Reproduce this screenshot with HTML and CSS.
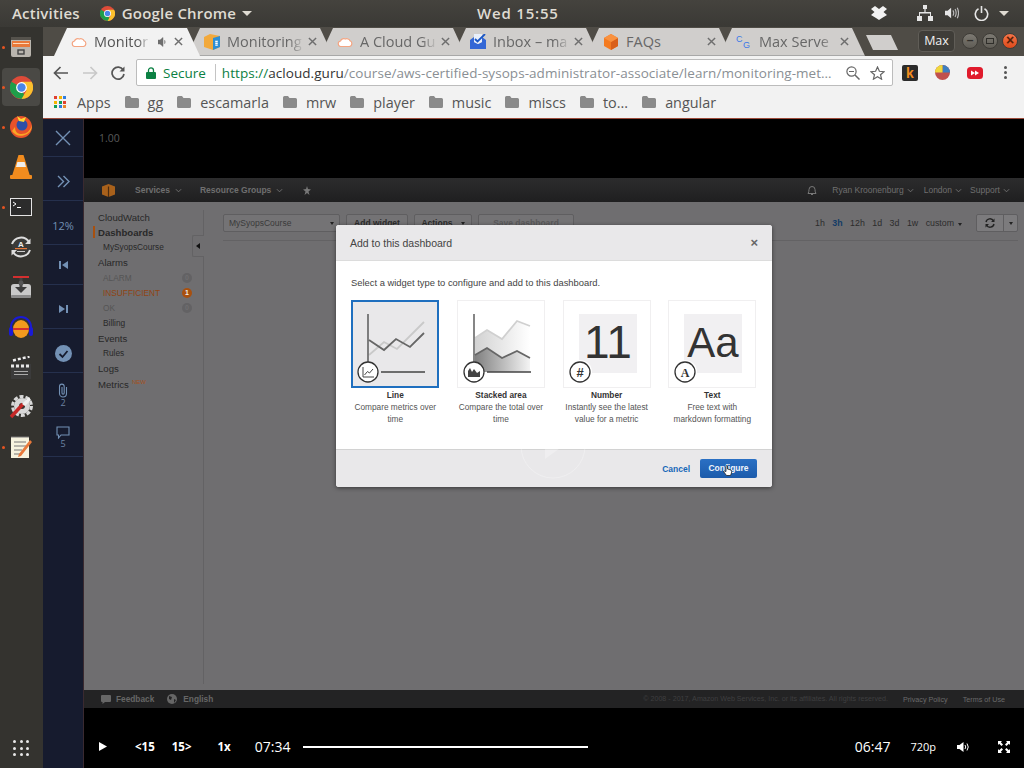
FILE: index.html

```html
<!DOCTYPE html>
<html lang="en">
<head>
  <meta charset="UTF-8">
  <title>A Cloud Guru - Monitoring</title>
  <meta name="viewport" content="width=device-width, initial-scale=1.0">
  <link rel="stylesheet" href="styles.css">
</head>
<body>
  <svg class="defs" width="0" height="0">
    <defs>
      <symbol id="chrome" viewBox="0 0 32 32">
        <circle cx="16" cy="16" r="16" fill="#dd4b39"/>
        <path d="M16 16 L2.1 24 A16 16 0 0 1 2 8 Z M16 16 L2.1 24 L8 29.9 L16 32 A16 16 0 0 0 21 31 Z" fill="#1e9e4a"/>
        <path d="M16 8 H30 A16 16 0 0 1 16 32 L23 20 Z" fill="#fbc02d"/>
        <circle cx="16" cy="16" r="7.5" fill="#fff"/>
        <circle cx="16" cy="16" r="5.8" fill="#4a86e8"/>
      </symbol>
      <symbol id="cloud" viewBox="0 0 16 10">
        <path d="M3.5 9.5 H12.5 A3 3 0 0 0 13 3.8 A3.4 3.4 0 0 0 8.5 2 A3.5 3.5 0 0 0 3.5 4 A2.8 2.8 0 0 0 3.5 9.5 Z" fill="#fff" stroke="#f4a582" stroke-width="1.2"/>
      </symbol>
      <symbol id="folder" viewBox="0 0 14 12">
        <path d="M0 1.5 Q0 0 1.5 0 H5 L6.5 2 H12.5 Q14 2 14 3.5 V10.5 Q14 12 12.5 12 H1.5 Q0 12 0 10.5 Z" fill="#8a8a8a"/>
      </symbol>
      <symbol id="tabx" viewBox="0 0 10 10">
        <path d="M1 1 L9 9 M9 1 L1 9" stroke="#6e6e6e" stroke-width="1.6"/>
      </symbol>
      <symbol id="caret" viewBox="0 0 8 5">
        <path d="M1 1 L4 4 L7 1" fill="none" stroke="#777" stroke-width="1"/>
      </symbol>
      <linearGradient id="lightfill" x1="0" x2="1" y1="0" y2="0">
        <stop offset="0" stop-color="#d2d2d2"/><stop offset="1" stop-color="#fff"/>
      </linearGradient>
      <linearGradient id="darkfill" x1="0" x2="1" y1="0" y2="0">
        <stop offset="0" stop-color="#808080"/><stop offset="1" stop-color="#f4f4f4"/>
      </linearGradient>
    </defs>
  </svg>

  <header class="topbar">
    <span class="top-item">Activities</span>
    <span class="top-app">
      <svg class="top-chrome" width="15" height="15"><use href="#chrome"/></svg>
      Google Chrome
      <span class="top-caret"></span>
    </span>
    <span class="top-clock">Wed 15:55</span>
    <span class="top-tray">
      <svg class="tray-drop" width="16" height="14" viewBox="0 0 16 14"><path d="M0 3 L4 0 L8 3 L12 0 L16 3 L12.5 6 L16 9 L11 12 L8 14 L5 12 L0 9 L3.5 6 Z" fill="#f2f2f2"/></svg>
      <svg class="tray-net" width="16" height="16" viewBox="0 0 16 16"><path d="M6 0 H10 V4 H8.6 V7 H14 V11 H16 V16 H11 V11 H13 V8.4 H3 V11 H5 V16 H0 V11 H2 V7 H7.4 V4 H6 Z" fill="#e6e6e6"/></svg>
      <svg class="tray-vol" width="14" height="14" viewBox="0 0 16 14"><path d="M0 4.5 H3 L7 1 V13 L3 9.5 H0 Z" fill="#e6e6e6"/><path d="M9 4 Q11 7 9 10 M11.5 2.5 Q14 7 11.5 11.5 M14 1 Q17 7 14 13" fill="none" stroke="#bcbcbc" stroke-width="1.3"/></svg>
      <svg class="tray-power" width="15" height="15" viewBox="0 0 15 15"><path d="M4.5 2.8 A6.2 6.2 0 1 0 10.5 2.8 M7.5 0 V7" fill="none" stroke="#e6e6e6" stroke-width="1.6"/></svg>
      <span class="top-caret"></span>
    </span>
  </header>

  <div class="desktop">
    <aside class="dock">
      <div class="dock-item has-dot">
        <svg width="22" height="22" viewBox="0 0 22 22"><rect x="1" y="1" width="20" height="20" rx="2" fill="#b9b5ae"/><rect x="1" y="1" width="20" height="3" fill="#55524c"/><rect x="2" y="5" width="18" height="6" fill="#e8793a"/><rect x="3" y="7" width="16" height="1" fill="#ffd9b8"/><rect x="8" y="14" width="6" height="4" fill="none" stroke="#444" stroke-width="1.4"/></svg>
      </div>
      <div class="dock-item is-active has-dot">
        <svg width="23" height="23"><use href="#chrome"/></svg>
      </div>
      <div class="dock-item has-dot">
        <svg width="24" height="24" viewBox="0 0 24 24"><circle cx="12" cy="12" r="11" fill="#e8522a"/><path d="M3 16 A11 11 0 0 0 23 10 Q20 20 11 19 Q6 18 6 12 Z" fill="#f9a825"/><circle cx="13" cy="10" r="5.5" fill="#2c4fa8"/><path d="M8 1 L12 4 L17 2 L15 7 L10 6 Z" fill="#fdd835"/></svg>
      </div>
      <div class="dock-item">
        <svg width="22" height="26" viewBox="0 0 22 26"><path d="M8.5 1 H13.5 L20 22 H2 Z" fill="#f28c1e"/><path d="M7.4 8 H14.6 L16 13 H6 Z" fill="#eee"/><rect x="0" y="21" width="22" height="4" rx="1" fill="#f28c1e"/></svg>
      </div>
      <div class="dock-item has-dot">
        <svg width="22" height="18" viewBox="0 0 22 18"><rect x="0.5" y="0.5" width="21" height="17" fill="#2c2c2c" stroke="#e4e4e4"/><path d="M3 4 L6 6 L3 8" fill="none" stroke="#fff"/><rect x="7" y="9" width="4" height="1" fill="#fff"/></svg>
      </div>
      <div class="dock-item">
        <svg width="22" height="22" viewBox="0 0 22 22"><circle cx="11" cy="11" r="9" fill="#3a3a38"/><path d="M2 8 A9.500 9.500 0 0 1 19 6 M20 14 A9.500 9.500 0 0 1 3 16" fill="none" stroke="#ddd" stroke-width="2"/><path d="M20.500 2.500 V8 H15 Z M1.500 19.500 V14 H7 Z" fill="#ddd"/><text class="dock-a" x="11" y="11" text-anchor="middle">A</text><rect x="5" y="12" width="12" height="1.2" fill="#e8793a"/><rect x="7" y="15" width="8" height="1" fill="#ccc"/></svg>
      </div>
      <div class="dock-item">
        <svg width="24" height="24" viewBox="0 0 24 24"><rect x="2" y="9" width="20" height="14" rx="3" fill="#c9c9c9"/><rect x="4" y="1" width="16" height="2" fill="#d32f2f"/><rect x="10.500" y="3" width="3" height="11" fill="#444"/><circle cx="12" cy="8" r="2.500" fill="#555"/><path d="M6 12 H18 L12 18 Z" fill="#3c3c3c"/><rect x="2" y="20" width="20" height="3" rx="1" fill="#8b8b8b"/></svg>
      </div>
      <div class="dock-item">
        <svg width="26" height="24" viewBox="0 0 26 24"><path d="M3 15 V12 A10 10 0 0 1 23 12 V15" fill="none" stroke="#1a1ad6" stroke-width="2"/><rect x="1" y="12" width="4" height="9" rx="2" fill="#1a1ad6"/><rect x="21" y="12" width="4" height="9" rx="2" fill="#1a1ad6"/><ellipse cx="13" cy="14" rx="8" ry="9" fill="#f29a1e"/><rect x="5" y="13" width="16" height="2" fill="#d32f2f"/></svg>
      </div>
      <div class="dock-item">
        <svg width="22" height="23" viewBox="0 0 22 23"><path d="M1 5 L20 0 L21 3 L2 8 Z" fill="#333"/><path d="M3 4.500 L19.500 0.500" stroke="#eee" stroke-width="2.500" stroke-dasharray="3 2"/><rect x="1" y="8" width="20" height="15" fill="#3b3b3b"/><path d="M1 10 H21" stroke="#e6e6e6" stroke-width="3" stroke-dasharray="3 2"/><rect x="4" y="15" width="14" height="1" fill="#aaa"/><rect x="4" y="18" width="14" height="1" fill="#aaa"/></svg>
      </div>
      <div class="dock-item">
        <svg width="24" height="24" viewBox="0 0 24 24"><circle cx="13" cy="11" r="8" fill="#d8d8d8"/><circle cx="13" cy="11" r="9.500" fill="none" stroke="#d8d8d8" stroke-width="3" stroke-dasharray="4 2"/><circle cx="13" cy="11" r="3" fill="#34332f"/><path d="M2 22 L14 9" stroke="#c62828" stroke-width="3.400"/><path d="M13 9 L20 2 L22 5 L16 11 Z" fill="#f0f0f0"/></svg>
      </div>
      <div class="dock-item has-dot">
        <svg width="22" height="24" viewBox="0 0 22 24"><rect x="1" y="2" width="18" height="21" fill="#f6f3df"/><path d="M1 2 H19 M4 7 H16 M4 11 H16 M4 15 H12 M4 19 H10" stroke="#777"/><path d="M9 19 L20 5 L22 7 L11 21 L8 22 Z" fill="#e8793a"/></svg>
      </div>
      <div class="dock-grid">
        <i></i><i></i><i></i><i></i><i></i><i></i><i></i><i></i><i></i>
      </div>
    </aside>

    <main class="browser">
      <div class="tabstrip">
        <div class="tab tab-active">
          <svg class="fav" width="16" height="10"><use href="#cloud"/></svg>
          <span class="tab-title">Monitori</span>
          <svg class="tab-sound" width="10" height="10" viewBox="0 0 10 10"><path d="M0 3 H2 L5 0.5 V9.5 L2 7 H0 Z M6.5 3 Q8 5 6.5 7" fill="#6e6e6e" stroke="#6e6e6e" stroke-width=".5"/></svg>
          <svg class="tab-x" width="9" height="9"><use href="#tabx"/></svg>
        </div>
        <div class="tab">
          <svg class="fav" width="16" height="16" viewBox="0 0 16 16"><path d="M0 3 L6 0 L16 2 V13 L9 16 L0 13 Z" fill="#f2a93b"/><path d="M9 4 L16 2 V13 L9 16 Z" fill="#2d8fd5"/><path d="M11 6.5 H14 V12 H11 Z M11 8.5 H14 M11 10.5 H14" fill="#fff" stroke="#2d8fd5" stroke-width=".5"/></svg>
          <span class="tab-title">Monitoring</span>
          <svg class="tab-x" width="9" height="9"><use href="#tabx"/></svg>
        </div>
        <div class="tab">
          <svg class="fav" width="16" height="10"><use href="#cloud"/></svg>
          <span class="tab-title">A Cloud Gu</span>
          <svg class="tab-x" width="9" height="9"><use href="#tabx"/></svg>
        </div>
        <div class="tab">
          <svg class="fav" width="16" height="15" viewBox="0 0 16 15"><path d="M0 6 L4 3 V8 L8 10 L12 8 V3 L16 6 V15 H0 Z" fill="#3367d6"/><path d="M4 0 H12 V8 L8 10 L4 8 Z" fill="#e8effb"/><path d="M5 5 L7.5 7.5 L15 0" fill="none" stroke="#1a56c4" stroke-width="1.8"/></svg>
          <span class="tab-title">Inbox – ma</span>
          <svg class="tab-x" width="9" height="9"><use href="#tabx"/></svg>
        </div>
        <div class="tab">
          <svg class="fav" width="16" height="16" viewBox="0 0 16 16"><path d="M8 0 L15 4 V12 L8 16 L1 12 V4 Z" fill="#f47b20"/><path d="M8 8 L15 4 V12 L8 16 Z" fill="#d9601a"/><path d="M1 4 L8 0 L15 4 L8 8 Z" fill="#f99240"/></svg>
          <span class="tab-title tab-title-short">FAQs</span>
          <svg class="tab-x" width="9" height="9"><use href="#tabx"/></svg>
        </div>
        <div class="tab">
          <span class="fav fav-cg"><i>C</i><i>G</i></span>
          <span class="tab-title">Max Serve</span>
          <svg class="tab-x" width="9" height="9"><use href="#tabx"/></svg>
        </div>
        <div class="newtab"></div>
        <span class="max-badge">Max</span>
        <div class="winctl">
          <span class="winbtn">–</span>
          <span class="winbtn winbtn-box"></span>
          <span class="winbtn winbtn-close">×</span>
        </div>
      </div>

      <div class="toolbar">
        <svg class="nav-ico" width="16" height="14" viewBox="0 0 16 14"><path d="M15 7 H2 M7.5 1 L1.5 7 L7.5 13" fill="none" stroke="#555" stroke-width="1.7"/></svg>
        <svg class="nav-ico" width="16" height="14" viewBox="0 0 16 14"><path d="M1 7 H14 M8.5 1 L14.5 7 L8.5 13" fill="none" stroke="#c8c8c8" stroke-width="1.7"/></svg>
        <svg class="nav-ico" width="14" height="14" viewBox="0 0 14 14"><path d="M12.2 4 A6 6 0 1 0 13 8" fill="none" stroke="#555" stroke-width="1.7"/><path d="M13.5 0.5 V5.5 H8.5 Z" fill="#555"/></svg>
        <div class="omnibox">
          <svg class="lock" width="10" height="12" viewBox="0 0 10 12"><path d="M2.5 5 V3.4 A2.5 2.5 0 0 1 7.5 3.4 V5" fill="none" stroke="#0b8043" stroke-width="1.3"/><rect y="5" width="10" height="7" rx="1" fill="#0b8043"/></svg>
          <span class="secure">Secure</span>
          <span class="omni-sep"></span>
          <span class="url"><span class="url-https">https://</span><span class="url-host">acloud.guru</span>/course/aws-certified-sysops-administrator-associate/learn/monitoring-met…</span>
          <svg class="omni-ico" width="14" height="14" viewBox="0 0 14 14"><circle cx="5.5" cy="5.5" r="4.6" fill="none" stroke="#666" stroke-width="1.2"/><path d="M9 9 L13.5 13.5" stroke="#666" stroke-width="1.5"/><path d="M3 5.5 H8" stroke="#666"/></svg>
          <svg class="omni-ico" width="15" height="14" viewBox="0 0 15 14"><path d="M7.5 1 L9.4 5.3 L14 5.7 L10.5 8.7 L11.6 13.2 L7.5 10.8 L3.4 13.2 L4.5 8.7 L1 5.7 L5.6 5.3 Z" fill="none" stroke="#666" stroke-width="1.2"/></svg>
        </div>
        <div class="extensions">
          <span class="ext-k">k</span>
          <svg width="15" height="15" viewBox="0 0 16 16"><circle cx="8" cy="8" r="8" fill="#c0504d"/><path d="M8 8 V0 A8 8 0 0 1 16 8 Z" fill="#3d7fc1"/><path d="M8 8 V0 A8 8 0 0 0 0 8 Z" fill="#efd83c"/></svg>
          <svg width="16" height="12" viewBox="0 0 16 12"><rect width="16" height="12" rx="3.5" fill="#e01b2c"/><path d="M4 3.5 L8 6 L4 8.500 Z M8 3.500 L12 6 L8 8.500 Z" fill="#fff"/></svg>
          <span class="menu-dots"><i></i><i></i><i></i></span>
        </div>
      </div>

      <nav class="bookmarks">
        <span class="bm bm-apps">
          <span class="apps-grid">
            <i class="c1"></i><i class="c2"></i><i class="c3"></i>
            <i class="c4"></i><i class="c5"></i><i class="c6"></i>
            <i class="c7"></i><i class="c8"></i><i class="c9"></i>
          </span>
          Apps
        </span>
        <span class="bm"><svg width="14" height="12"><use href="#folder"/></svg>gg</span>
        <span class="bm"><svg width="14" height="12"><use href="#folder"/></svg>escamarla</span>
        <span class="bm"><svg width="14" height="12"><use href="#folder"/></svg>mrw</span>
        <span class="bm"><svg width="14" height="12"><use href="#folder"/></svg>player</span>
        <span class="bm"><svg width="14" height="12"><use href="#folder"/></svg>music</span>
        <span class="bm"><svg width="14" height="12"><use href="#folder"/></svg>miscs</span>
        <span class="bm"><svg width="14" height="12"><use href="#folder"/></svg>to...</span>
        <span class="bm"><svg width="14" height="12"><use href="#folder"/></svg>angular</span>
      </nav>

      <div class="player">
        <aside class="rail">
          <div class="rail-item rail-first">
            <svg width="16" height="16" viewBox="0 0 16 16"><path d="M1 1 L15 15 M15 1 L1 15" stroke="#7391b5" stroke-width="1.4"/></svg>
          </div>
          <div class="rail-item rail-tall">
            <svg width="13" height="13" viewBox="0 0 13 13"><path d="M1 1 L6.500 6.500 L1 12 M6.500 1 L12 6.500 L6.500 12" fill="none" stroke="#7391b5" stroke-width="1.4"/></svg>
          </div>
          <div class="rail-item rail-tall rail-pct">12%</div>
          <div class="rail-item">
            <svg width="9" height="8" viewBox="0 0 9 8"><path d="M0 0 H2 V8 H0 Z M9 0 V8 L3 4 Z" fill="#7391b5"/></svg>
          </div>
          <div class="rail-item rail-tall">
            <svg width="9" height="8" viewBox="0 0 9 8"><path d="M9 0 H7 V8 H9 Z M0 0 V8 L6 4 Z" fill="#7391b5"/></svg>
          </div>
          <div class="rail-item rail-tall">
            <svg width="17" height="17" viewBox="0 0 17 17"><circle cx="8.500" cy="8.500" r="8.500" fill="#7391b5"/><path d="M4.500 9 L7.500 12 L12.500 6" fill="none" stroke="#161b2e" stroke-width="1.800"/></svg>
          </div>
          <div class="rail-item rail-tall rail-stack">
            <svg width="10" height="15" viewBox="0 0 10 15"><path d="M8.500 4 V10.500 A3.500 3.500 0 0 1 1.500 10.500 V3.500 A2.300 2.300 0 0 1 6.200 3.500 V10 A1 1 0 0 1 4 10 V4" fill="none" stroke="#7391b5" stroke-width="1.100"/></svg>
            <span>2</span>
          </div>
          <div class="rail-item rail-stack">
            <svg width="14" height="13" viewBox="0 0 14 13"><path d="M1 1 H13 V9 H5 L2.500 12 V9 H1 Z" fill="none" stroke="#7391b5" stroke-width="1.100"/></svg>
            <span>5</span>
          </div>
        </aside>

        <section class="video">
          <div class="speedbar">1.00</div>

          <div class="aws">
            <div class="aws-nav">
              <svg class="aws-cube" width="13" height="13" viewBox="0 0 13 13"><path d="M0 2.500 L6.500 0 L13 2.500 V10.500 L6.500 13 L0 10.500 Z" fill="#a8611b"/><path d="M5.900 2.500 H7.100 V13 H5.900 Z" fill="#4a2c10"/></svg>
              <span class="aws-menu aws-services">Services<svg width="7" height="5"><use href="#caret"/></svg></span>
              <span class="aws-menu aws-groups">Resource Groups<svg width="7" height="5"><use href="#caret"/></svg></span>
              <svg class="aws-pin" width="8" height="9" viewBox="0 0 8 9"><path d="M4 0 L5 3 L8 3.500 L5.500 5.500 L6.500 9 L4 7 L1.500 9 L2.500 5.500 L0 3.500 L3 3 Z" fill="#777"/></svg>
              <svg class="aws-bell" width="10" height="11" viewBox="0 0 10 11"><path d="M1 8.500 Q2 7 2 4.500 A3 3 0 0 1 8 4.500 Q8 7 9 8.500 Z M4 9.500 H6" fill="none" stroke="#777"/></svg>
              <span class="aws-menu aws-user">Ryan Kroonenburg<svg width="7" height="5"><use href="#caret"/></svg></span>
              <span class="aws-menu aws-region">London<svg width="7" height="5"><use href="#caret"/></svg></span>
              <span class="aws-menu aws-support">Support<svg width="7" height="5"><use href="#caret"/></svg></span>
            </div>

            <div class="aws-body">
              <nav class="cw-side">
                <span class="cw-link">CloudWatch</span>
                <span class="cw-link cw-current">Dashboards</span>
                <span class="cw-sub">MySyopsCourse</span>
                <span class="cw-link">Alarms</span>
                <span class="cw-sub cw-off">ALARM<b class="cw-count">0</b></span>
                <span class="cw-sub cw-warn">INSUFFICIENT<b class="cw-count cw-count-on">1</b></span>
                <span class="cw-sub cw-off">OK<b class="cw-count">0</b></span>
                <span class="cw-sub">Billing</span>
                <span class="cw-link">Events</span>
                <span class="cw-sub">Rules</span>
                <span class="cw-link">Logs</span>
                <span class="cw-link">Metrics<sup class="cw-new">NEW</sup></span>
                <span class="cw-toggle"></span>
              </nav>
              <div class="cw-main">
                <div class="cw-tools">
                  <span class="cw-select">MySyopsCourse<i class="cw-down"></i></span>
                  <span class="cw-btn cw-add">Add widget</span>
                  <span class="cw-btn cw-actions">Actions<i class="cw-down"></i></span>
                  <span class="cw-btn cw-save">Save dashboard</span>
                  <span class="cw-ranges">
                    <span>1h</span><span class="cw-range-on">3h</span><span>12h</span><span>1d</span><span>3d</span><span>1w</span><span>custom<i class="cw-down"></i></span>
                  </span>
                  <span class="cw-refresh">
                    <span class="cw-refresh-l"><svg width="10" height="10" viewBox="0 0 10 10"><path d="M1 4 A4 4 0 0 1 8.500 3 M9 6 A4 4 0 0 1 1.500 7" fill="none" stroke="#222" stroke-width="1.400"/><path d="M9.500 0.500 V4 H6 Z M0.500 9.500 V6 H4 Z" fill="#222"/></svg></span>
                    <span class="cw-refresh-r"><i class="cw-down"></i></span>
                  </span>
                </div>
              </div>
            </div>

            <div class="aws-foot">
              <svg class="foot-bubble" width="10" height="9" viewBox="0 0 10 9"><path d="M1 0 H9 Q10 0 10 1 V6 Q10 7 9 7 H4 L1.500 9 V7 H1 Q0 7 0 6 V1 Q0 0 1 0 Z" fill="#666"/></svg>
              <span class="foot-strong">Feedback</span>
              <svg class="foot-globe" width="10" height="10" viewBox="0 0 10 10"><circle cx="5" cy="5" r="5" fill="#666"/><path d="M2 2 L5 3 L4 6 L2 5 Z M7 5 L9 6 L7 9 Z" fill="#232324"/></svg>
              <span class="foot-strong">English</span>
              <span class="foot-copy">© 2008 - 2017, Amazon Web Services, Inc. or its affiliates. All rights reserved.</span>
              <span class="foot-link">Privacy Policy</span>
              <span class="foot-link foot-terms">Terms of Use</span>
            </div>

            <div class="modal">
              <div class="modal-head">
                <span>Add to this dashboard</span>
                <span class="modal-x">×</span>
              </div>
              <div class="modal-body">
                <p class="modal-lead">Select a widget type to configure and add to this dashboard.</p>
                <div class="widgets">
                  <div class="widget">
                    <div class="widget-card widget-selected">
                      <svg width="86" height="86" viewBox="1 1 86 86">
                        <path d="M18 55 L33 42 L46 49 L73 22" fill="none" stroke="#c9c9c9" stroke-width="1.800"/>
                        <path d="M18 40 L33 50 L45 39 L59 47 L73 33" fill="none" stroke="#666" stroke-width="1.800"/>
                        <path d="M17 14 V62 M30 72 H74" stroke="#444" stroke-width="1.300"/>
                        <circle cx="17" cy="72" r="10" fill="#fff" stroke="#333" stroke-width="1.300"/>
                        <path d="M12 67 V77 H23 M13.500 75 L16.500 71.500 L18.500 73 L22 69" fill="none" stroke="#444"/>
                      </svg>
                    </div>
                    <b>Line</b>
                    <span>Compare metrics over time</span>
                  </div>
                  <div class="widget">
                    <div class="widget-card">
                      <svg width="86" height="86" viewBox="1 1 86 86">
                        <path d="M18 38 L30 30 L45 39 L60 21 L73 26 V58 H18 Z" fill="url(#lightfill)"/>
                        <path d="M18 55 L30 48 L45 58 L60 51 L73 58 V72 H18 Z" fill="url(#darkfill)"/>
                        <path d="M18 38 L30 30 L45 39 L60 21 L73 26" fill="none" stroke="#d0d0d0" stroke-width="1.800"/>
                        <path d="M18 55 L30 48 L45 58 L60 51 L73 58" fill="none" stroke="#666" stroke-width="1.800"/>
                        <path d="M17 14 V62 M30 72 H74" stroke="#444" stroke-width="1.300"/>
                        <circle cx="17" cy="72" r="10" fill="#fff" stroke="#333" stroke-width="1.300"/>
                        <path d="M11 77 V71 L13 68 L15 72 L17 69 L20 73 L23 71 V77 Z" fill="#444"/>
                      </svg>
                    </div>
                    <b>Stacked area</b>
                    <span>Compare the total over time</span>
                  </div>
                  <div class="widget">
                    <div class="widget-card">
                      <svg width="86" height="86" viewBox="1 1 86 86">
                        <rect x="16" y="14" width="58" height="59" fill="#f1f0f2"/>
                        <text class="widget-big" x="45" y="58" text-anchor="middle">11</text>
                        <circle cx="17" cy="72" r="12" fill="#fff"/>
                        <circle cx="17" cy="72" r="10" fill="#fff" stroke="#333" stroke-width="1.300"/>
                        <text class="widget-glyph" x="17" y="76.500" text-anchor="middle">#</text>
                      </svg>
                    </div>
                    <b>Number</b>
                    <span>Instantly see the latest value for a metric</span>
                  </div>
                  <div class="widget">
                    <div class="widget-card">
                      <svg width="86" height="86" viewBox="1 1 86 86">
                        <rect x="16" y="14" width="58" height="59" fill="#f1f0f2"/>
                        <text class="widget-aa" x="45" y="57" text-anchor="middle">Aa</text>
                        <circle cx="17" cy="72" r="12" fill="#fff"/>
                        <circle cx="17" cy="72" r="10" fill="#fff" stroke="#333" stroke-width="1.300"/>
                        <text class="widget-serif" x="17" y="76.500" text-anchor="middle">A</text>
                      </svg>
                    </div>
                    <b>Text</b>
                    <span>Free text with markdown formatting</span>
                  </div>
                </div>
              </div>
              <div class="modal-foot">
                <span class="modal-cancel">Cancel</span>
                <span class="modal-ok">Configure</span>
              </div>
              <svg class="big-play" width="66" height="66" viewBox="0 0 66 66"><circle cx="33" cy="33" r="32" fill="none" stroke="#fff" stroke-opacity=".28"/><path d="M25 20 L43 33 L25 46 Z" fill="#fff" fill-opacity=".28"/></svg>
              <svg class="hand" width="9" height="11" viewBox="0 0 9 11"><path d="M3 1 Q4 0 4.500 1 V4 L8 5 Q9 6 8.500 8 L7.500 10.500 H3.500 L0.500 6.500 Q1 5.500 3 6.500 Z" fill="#fff" stroke="#222" stroke-width=".8"/></svg>
            </div>
          </div>

          <div class="controls">
            <svg class="ctl-play" width="8" height="9" viewBox="0 0 8 9"><path d="M0 0 L8 4.500 L0 9 Z" fill="#fff"/></svg>
            <span class="ctl-skip ctl-back">&lt;15</span>
            <span class="ctl-skip ctl-fwd">15&gt;</span>
            <span class="ctl-skip ctl-speed">1x</span>
            <span class="ctl-time">07:34</span>
            <span class="ctl-bar"></span>
            <span class="ctl-time ctl-total">06:47</span>
            <span class="ctl-quality">720p</span>
            <svg class="ctl-vol" width="13" height="10" viewBox="0 0 13 10"><path d="M0 3 H2.500 L6.500 0 V10 L2.500 7 H0 Z" fill="#fff"/><path d="M8 3 Q9.500 5 8 7 M10 1.500 Q12.500 5 10 8.500" fill="none" stroke="#fff"/></svg>
            <svg class="ctl-full" width="12" height="12" viewBox="0 0 12 12"><path d="M0 0 H4 L2.800 1.200 L5 3.500 L3.500 5 L1.200 2.800 L0 4 Z M12 0 V4 L10.800 2.800 L8.500 5 L7 3.500 L9.200 1.200 L8 0 Z M0 12 V8 L1.200 9.200 L3.500 7 L5 8.500 L2.800 10.800 L4 12 Z M12 12 H8 L9.200 10.800 L7 8.500 L8.500 7 L10.800 9.200 L12 8 Z" fill="#fff"/></svg>
          </div>
        </section>
      </div>
    </main>
  </div>
</body>
</html>
```

FILE: styles.css

```css
html, body {
  margin: 0;
  padding: 0;
  width: 1024px;
  height: 768px;
  overflow: hidden;
  background: #000;
  font-family: "Open Sans", "Noto Sans", sans-serif;
}
.defs {
  position: absolute;
}
svg {
  display: block;
  flex: none;
}

/* ubuntu top bar */
.topbar {
  position: relative;
  height: 27px;
  box-sizing: border-box;
  padding: 0 0 1px 12px;
  display: flex;
  align-items: center;
  background: linear-gradient(#45433e, #3a3935);
  color: #dfdbd2;
  font-size: 15px;
  font-weight: 600;
  letter-spacing: .2px;
}
.top-app {
  display: flex;
  align-items: center;
  margin-left: 20px;
}
.top-chrome {
  margin-right: 7px;
}
.top-caret {
  display: inline-block;
  width: 0;
  height: 0;
  margin-left: 6px;
  border-left: 5px solid transparent;
  border-right: 5px solid transparent;
  border-top: 5px solid #dfdbd2;
}
.top-clock {
  position: absolute;
  left: 477px;
  letter-spacing: .8px;
}
.top-tray {
  position: absolute;
  left: 871px;
  display: flex;
  align-items: center;
}
.tray-net {
  margin-left: 30px;
}
.tray-vol {
  margin-left: 12px;
}
.tray-power {
  margin-left: 15px;
}
.top-tray .top-caret {
  margin-left: 10px;
}

.desktop {
  display: flex;
  height: 741px;
}

/* launcher */
.dock {
  width: 43px;
  flex: none;
  display: flex;
  flex-direction: column;
  padding-top: 1px;
  background: #34332f;
}
.dock-item {
  position: relative;
  height: 38px;
  margin: 0 3px 2px 2px;
  border-radius: 4px;
  display: flex;
  align-items: center;
  justify-content: center;
}
.dock-item.is-active {
  background: #4a4945;
}
.dock-item.has-dot::before {
  content: "";
  position: absolute;
  left: 0;
  top: 18px;
  width: 3px;
  height: 3px;
  border-radius: 50%;
  background: #e95420;
}
.dock-a {
  font: bold 8px "Liberation Sans", sans-serif;
  fill: #eee;
}
.dock-grid {
  margin: auto 0 12px 13px;
  width: 16px;
  display: grid;
  grid-template-columns: repeat(3, 3px);
  gap: 3.5px;
}
.dock-grid i {
  width: 3px;
  height: 3px;
  border-radius: 50%;
  background: #e8e8e8;
}

.browser {
  flex: 1;
  display: flex;
  flex-direction: column;
  min-width: 0;
}

/* tabs */
.tabstrip {
  position: relative;
  height: 29px;
  flex: none;
  display: flex;
  padding: 1px 0 0 11px;
  box-sizing: border-box;
  background: #4f4c46;
}
.tab {
  position: relative;
  width: 146px;
  margin-right: -13px;
  height: 28px;
  box-sizing: border-box;
  padding: 0 16px 1px 17px;
  display: flex;
  align-items: center;
  flex: none;
  background: linear-gradient(#d0cecc 96%, #a8a8a8 96%);
  clip-path: polygon(0 100%, 13px 0, 133px 0, 146px 100%);
  color: #676767;
  font-size: 14.500px;
}
.tab:nth-child(1) { z-index: 6; }
.tab:nth-child(2) { z-index: 5; }
.tab:nth-child(3) { z-index: 4; }
.tab:nth-child(4) { z-index: 3; }
.tab:nth-child(5) { z-index: 2; }
.tab:nth-child(6) { z-index: 1; }
.tab-active {
  background: #f2f2f2;
  color: #555;
  padding-right: 17px;
}
.fav {
  margin-right: 7px;
}
.fav-cg {
  position: relative;
  display: block;
  flex: none;
  width: 16px;
  height: 16px;
  color: #3b78e7;
  font: 9px "Liberation Sans", sans-serif;
}
.fav-cg i {
  position: absolute;
  left: 0;
  top: 0;
  font-style: normal;
}
.fav-cg i + i {
  left: 7px;
  top: 6px;
}
.tab-title {
  flex: 1;
  min-width: 0;
  white-space: nowrap;
  -webkit-mask-image: linear-gradient(to right, #000 76%, transparent 96%);
  mask-image: linear-gradient(to right, #000 76%, transparent 96%);
}
.tab-title-short {
  -webkit-mask-image: none;
  mask-image: none;
}
.tab-sound {
  margin: 0 6px;
}
.newtab {
  position: relative;
  z-index: 0;
  width: 32px;
  height: 15px;
  margin: 7px 0 0 14px;
  background: #d0cecc;
  clip-path: polygon(0 0, 25px 0, 32px 100%, 7px 100%);
}
.max-badge {
  position: absolute;
  left: 875px;
  top: 3px;
  width: 37px;
  height: 22px;
  box-sizing: border-box;
  border: 1px solid #605d57;
  border-radius: 4px;
  background: #3f3d38;
  color: #f0f0f0;
  font-size: 12.500px;
  line-height: 20px;
  text-align: center;
}
.winctl {
  position: absolute;
  left: 919px;
  top: 6px;
  display: flex;
  gap: 4px;
}
.winbtn {
  width: 16px;
  height: 16px;
  border-radius: 50%;
  border: 1px solid #3e3c37;
  box-sizing: border-box;
  background: linear-gradient(#7d7a73, #5f5c55);
  color: #2f2e2a;
  font: bold 12px/13px "Liberation Sans", sans-serif;
  text-align: center;
}
.winbtn-box {
  position: relative;
}
.winbtn-box::after {
  content: "";
  position: absolute;
  left: 3px;
  top: 4px;
  width: 6px;
  height: 4px;
  border: 1px solid #2f2e2a;
}
.winbtn-close {
  background: linear-gradient(#f4754a, #de4a1b);
  color: #5a1f08;
  font-size: 14px;
}

/* address bar */
.toolbar {
  height: 33px;
  flex: none;
  display: flex;
  align-items: center;
  box-sizing: border-box;
  padding-left: 10px;
  background: #f2f2f2;
}
.nav-ico {
  margin-right: 13px;
}
.nav-ico + .nav-ico + .nav-ico {
  margin-right: 11px;
}
.omnibox {
  width: 757px;
  height: 27px;
  flex: none;
  box-sizing: border-box;
  display: flex;
  align-items: center;
  padding: 0 7px 0 9px;
  background: #fff;
  border: 1px solid #bcbcbc;
  border-radius: 2px;
  font-size: 13.500px;
  white-space: nowrap;
}
.secure {
  margin-left: 7px;
  color: #0b8043;
}
.omni-sep {
  width: 1px;
  height: 17px;
  margin: 0 6px 0 9px;
  background: #c4c4c4;
}
.url {
  flex: 1;
  min-width: 0;
  color: #8a8f94;
  letter-spacing: .05px;
}
.url-https {
  color: #0b8043;
}
.url-host {
  color: #333;
}
.omni-ico {
  margin-left: 10px;
}
.extensions {
  flex: 1;
  display: flex;
  align-items: center;
  padding-left: 9px;
  gap: 17px;
}
.ext-k {
  width: 16px;
  height: 16px;
  border-radius: 2px;
  background: #2b2b2b;
  color: #f28c1e;
  font: bold 14px/16px "Liberation Sans", sans-serif;
  text-align: center;
}
.menu-dots {
  display: flex;
  flex-direction: column;
  gap: 2px;
  margin-left: 4px;
}
.menu-dots i {
  width: 3px;
  height: 3px;
  border-radius: 50%;
  background: #555;
}

/* bookmarks */
.bookmarks {
  height: 30px;
  flex: none;
  display: flex;
  align-items: center;
  gap: 14px;
  box-sizing: border-box;
  padding: 0 0 3px 11px;
  background: #f2f2f2;
  border-bottom: 1px solid #9c4a3a;
  color: #555;
  font-size: 14.400px;
}
.bm {
  display: flex;
  align-items: center;
  gap: 9px;
}
.bm-apps {
  gap: 11px;
}
.apps-grid {
  display: grid;
  grid-template-columns: repeat(3, 3px);
  gap: 1.500px;
}
.apps-grid i {
  width: 3px;
  height: 3px;
}
.c1, .c6 { background: #e0402f; }
.c2, .c4 { background: #f4b400; }
.c3, .c8 { background: #2f7de1; }
.c5, .c7 { background: #0f9d58; }
.c9 { background: #e8872b; }

/* course player */
.player {
  flex: 1;
  display: flex;
  min-height: 0;
}
.rail {
  width: 41px;
  flex: none;
  box-sizing: border-box;
  border-right: 1px solid #3a2a30;
  background: #161b2e;
  color: #7391b5;
}
.rail-item {
  height: 40px;
  box-sizing: border-box;
  border-bottom: 1px solid #25304d;
  display: flex;
  align-items: center;
  justify-content: center;
  font-size: 11px;
}
.rail-first {
  height: 38px;
}
.rail-tall {
  height: 44px;
  padding-top: 5px;
}
.rail-pct {
  font-size: 11px;
}
.rail-stack {
  flex-direction: column;
  color: #6d84a3;
  font-size: 9px;
  line-height: 10px;
  padding-top: 2px;
}
.video {
  flex: 1;
  min-width: 0;
  display: flex;
  flex-direction: column;
  background: #000;
}
.speedbar {
  height: 59px;
  flex: none;
  box-sizing: border-box;
  padding: 12px 0 0 15px;
  color: #5a5a5a;
  font-size: 10.500px;
}

/* dimmed aws console */
.aws {
  position: relative;
  flex: 1;
  display: flex;
  flex-direction: column;
  font-family: "Liberation Sans", Arial, sans-serif;
}
.aws-nav {
  height: 24px;
  flex: none;
  display: flex;
  align-items: center;
  padding-left: 18px;
  background: linear-gradient(#2c2c2d, #1f1f20);
  color: #6f6f6f;
  font-size: 8.500px;
  font-weight: bold;
  white-space: nowrap;
}
.aws-menu {
  display: flex;
  align-items: center;
  gap: 5px;
}
.aws-user, .aws-region, .aws-support {
  font-weight: normal;
  gap: 3px;
}
.aws-services {
  margin-left: 20px;
}
.aws-groups {
  margin-left: 18px;
}
.aws-pin {
  margin-left: 20px;
}
.aws-bell {
  margin-left: 496px;
}
.aws-user {
  margin-left: 15px;
}
.aws-region {
  margin-left: 10px;
}
.aws-support {
  margin-left: 8px;
}
.aws-body {
  flex: 1;
  display: flex;
  min-height: 0;
  background: #6f6e70;
}
.cw-side {
  position: relative;
  width: 120px;
  flex: none;
  box-sizing: border-box;
  margin-top: 8px;
  margin-bottom: 6px;
  padding: 0 0 0 14px;
  border-right: 1px solid #636264;
  display: flex;
  flex-direction: column;
  color: #282828;
  font-size: 9.500px;
}
.cw-link, .cw-sub {
  position: relative;
  height: 15.150px;
  line-height: 15px;
}
.cw-link {
  font-size: 9.600px;
}
.cw-sub {
  padding-left: 5px;
  font-size: 8.300px;
}
.cw-current {
  font-weight: bold;
}
.cw-current::before {
  content: "";
  position: absolute;
  left: -5px;
  top: 1px;
  width: 2px;
  height: 12px;
  background: #a8500f;
}
.cw-off {
  color: #555;
}
.cw-warn {
  color: #8f4413;
}
.cw-count {
  position: absolute;
  left: 84px;
  top: 2px;
  width: 10px;
  height: 10px;
  border-radius: 50%;
  background: #636264;
  color: #6f6e70;
  font-size: 7px;
  line-height: 10px;
  text-align: center;
}
.cw-count-on {
  background: #a8500f;
  color: #eee;
}
.cw-new {
  margin-left: 3px;
  color: #a5501c;
  font-size: 6px;
  line-height: 0;
  vertical-align: 4px;
}
.cw-toggle {
  position: absolute;
  right: -1px;
  top: 25px;
  width: 12px;
  height: 22px;
  box-sizing: border-box;
  border: 1px solid #636264;
  border-right: none;
  border-radius: 2px 0 0 2px;
  background: #6f6e70;
}
.cw-toggle::after {
  content: "";
  position: absolute;
  left: 3px;
  top: 7px;
  border-top: 3.500px solid transparent;
  border-bottom: 3.500px solid transparent;
  border-right: 4px solid #111;
}
.cw-main {
  flex: 1;
  min-width: 0;
  padding: 12px 6px 0 19px;
}
.cw-tools {
  position: relative;
  display: flex;
  align-items: center;
  height: 18px;
  padding-bottom: 8px;
  border-bottom: 1px solid #636264;
  color: #2c2c2c;
  font-size: 8.500px;
}
.cw-select, .cw-btn {
  height: 18px;
  box-sizing: border-box;
  display: flex;
  align-items: center;
  justify-content: center;
  border: 1px solid #5f5e60;
  border-radius: 2px;
  background: #747375;
}
.cw-select {
  width: 117px;
  justify-content: space-between;
  padding: 0 5px;
  color: #3a3a3a;
}
.cw-btn {
  margin-left: 6px;
  font-weight: bold;
}
.cw-add {
  width: 62px;
}
.cw-actions {
  width: 58px;
  gap: 4px;
}
.cw-save {
  width: 96px;
  margin-left: 6px;
  color: #5a595b;
}
.cw-down {
  display: inline-block;
  width: 0;
  height: 0;
  margin-left: 4px;
  border-left: 2.500px solid transparent;
  border-right: 2.500px solid transparent;
  border-top: 3px solid #222;
}
.cw-ranges {
  display: flex;
  align-items: center;
  gap: 7.500px;
  margin-left: auto;
  margin-right: 14px;
  font-size: 8.800px;
}
.cw-range-on {
  color: #123c66;
  font-weight: bold;
}
.cw-refresh {
  display: flex;
  height: 18px;
  box-sizing: border-box;
  border: 1px solid #5f5e60;
  border-radius: 2px;
  background: #7c7b7d;
}
.cw-refresh-l {
  width: 26px;
  display: flex;
  align-items: center;
  justify-content: center;
  border-right: 1px solid #5f5e60;
}
.cw-refresh-r {
  width: 13px;
  display: flex;
  align-items: center;
  justify-content: center;
}
.cw-refresh-r .cw-down {
  margin-left: 0;
}
.aws-foot {
  height: 18px;
  flex: none;
  display: flex;
  align-items: center;
  padding-left: 17px;
  gap: 6px;
  background: #232324;
  color: #3f3f40;
  font-size: 7.150px;
}
.foot-bubble {
  margin-right: -1px;
}
.foot-strong {
  color: #666;
  font-size: 8.300px;
  font-weight: bold;
}
.foot-globe {
  margin-left: 7px;
}
.foot-copy {
  margin-left: auto;
  margin-right: 9px;
}
.foot-link {
  color: #6a6a6a;
  font-size: 7.200px;
}
.foot-terms {
  margin-left: 9px;
  margin-right: 19px;
}

/* widget dialog */
.modal {
  position: absolute;
  left: 252px;
  top: 47px;
  width: 436px;
  height: 262px;
  display: flex;
  flex-direction: column;
  background: #fff;
  border-radius: 3px;
  box-shadow: 0 1px 4px rgba(0, 0, 0, .5);
  overflow: hidden;
}
.modal-head {
  height: 36px;
  flex: none;
  box-sizing: border-box;
  display: flex;
  align-items: center;
  justify-content: space-between;
  padding: 0 14px;
  background: #e9e8ea;
  border-bottom: 1px solid #dcdcdc;
  color: #444;
  font-size: 10.500px;
}
.modal-x {
  color: #666;
  font-size: 13px;
  font-weight: bold;
}
.modal-body {
  flex: 1;
  padding: 16px 15px 0;
}
.modal-lead {
  margin: 0 0 12px;
  color: #444;
  font-size: 9.400px;
  line-height: 11px;
}
.widgets {
  display: flex;
  gap: 17.200px;
}
.widget {
  width: 88.500px;
  display: flex;
  flex-direction: column;
  align-items: center;
  color: #555;
  font-size: 8.300px;
  line-height: 12px;
  text-align: center;
}
.widget b {
  margin-top: 1px;
  color: #333;
}
.widget-card {
  width: 88px;
  height: 88px;
  box-sizing: border-box;
  border: 1px solid #f0eff0;
  background: #fff;
}
.widget-selected {
  border: 1px solid #1f6fbf;
  background: #e9e8ea;
  outline: 1px solid #1f6fbf;
  outline-offset: -2px;
}
.widget-big {
  font: 46px "Liberation Sans", sans-serif;
  fill: #333;
}
.widget-aa {
  font: 42px "Liberation Sans", sans-serif;
  fill: #333;
}
.widget-glyph {
  font: bold 13px "Liberation Sans", sans-serif;
  fill: #333;
}
.widget-serif {
  font: bold 12px "Liberation Serif", serif;
  fill: #333;
}
.modal-foot {
  height: 38px;
  flex: none;
  box-sizing: border-box;
  display: flex;
  align-items: center;
  justify-content: flex-end;
  padding-right: 15px;
  background: #e9e8ea;
  border-top: 1px solid #d2d2d2;
  font-size: 8.500px;
  font-weight: bold;
}
.modal-cancel {
  margin-right: 10px;
  color: #1667b8;
}
.modal-ok {
  width: 57px;
  height: 19px;
  border-radius: 2px;
  background: linear-gradient(#2a70c4, #1c5bab);
  color: #f0f4fa;
  line-height: 19px;
  text-align: center;
}
.big-play {
  position: absolute;
  left: 184px;
  top: 188px;
}
.hand {
  position: absolute;
  left: 387px;
  top: 240px;
}

/* playback controls */
.controls {
  height: 60px;
  flex: none;
  display: flex;
  align-items: center;
  padding: 17px 14px 0 15px;
  color: #fff;
  box-sizing: border-box;
}
.ctl-skip {
  font-size: 11.500px;
  font-weight: 700;
}
.ctl-back {
  margin-left: 28px;
}
.ctl-fwd {
  margin-left: 17px;
}
.ctl-speed {
  margin-left: 26px;
}
.ctl-time {
  margin-left: 24px;
  font-size: 14px;
}
.ctl-bar {
  width: 285px;
  height: 2px;
  margin-left: 13px;
  background: #fff;
}
.ctl-total {
  margin-left: auto;
}
.ctl-quality {
  margin-left: 20px;
  font-size: 11px;
}
.ctl-vol {
  margin-left: 21px;
}
.ctl-full {
  margin-left: 28px;
}
```
